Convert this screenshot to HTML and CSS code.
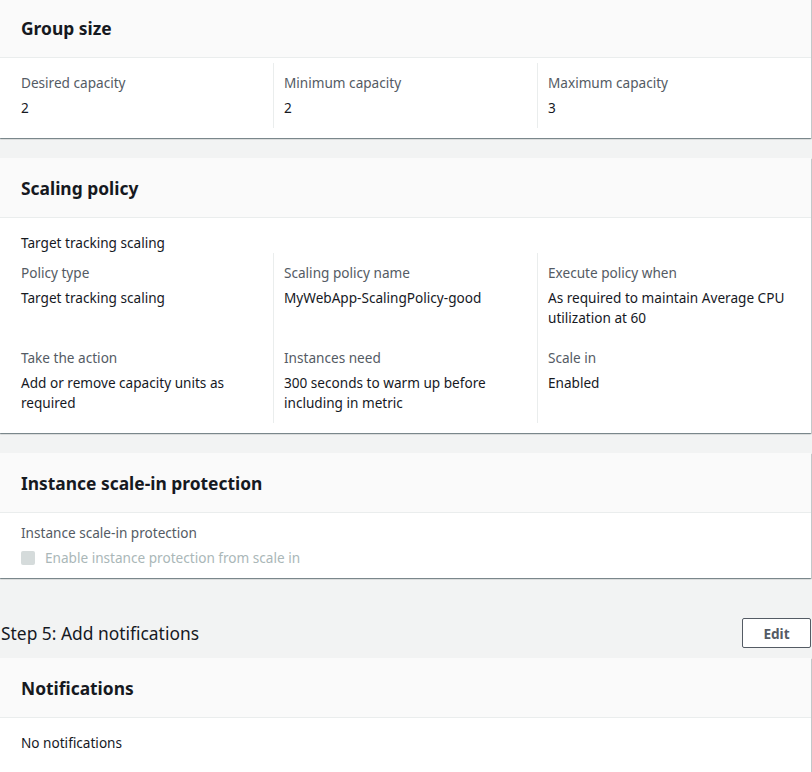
FILE: index.html
```html
<!DOCTYPE html>
<html>
<head>
<meta charset="utf-8">
<link rel="stylesheet" href="styles.css">
</head>
<body>
<div class="page">
  <section class="card">
    <header class="card-head"><h2>Group size</h2></header>
    <div class="card-body cols">
      <div class="col"><div class="label">Desired capacity</div><div class="value">2</div></div>
      <div class="col"><div class="label">Minimum capacity</div><div class="value">2</div></div>
      <div class="col"><div class="label">Maximum capacity</div><div class="value">3</div></div>
    </div>
  </section>

  <section class="card">
    <header class="card-head"><h2>Scaling policy</h2></header>
    <div class="card-body">
      <div class="subhead">Target tracking scaling</div>
      <div class="cols">
        <div class="col top"><div class="label">Policy type</div><div class="value">Target tracking scaling</div></div>
        <div class="col top"><div class="label">Scaling policy name</div><div class="value">MyWebApp-ScalingPolicy-good</div></div>
        <div class="col top"><div class="label">Execute policy when</div><div class="value">As required to maintain Average CPU utilization at 60</div></div>
        <div class="col bottom"><div class="label">Take the action</div><div class="value">Add or remove capacity units as required</div></div>
        <div class="col bottom"><div class="label">Instances need</div><div class="value">300 seconds to warm up before including in metric</div></div>
        <div class="col bottom"><div class="label">Scale in</div><div class="value">Enabled</div></div>
      </div>
    </div>
  </section>

  <section class="card">
    <header class="card-head"><h2>Instance scale-in protection</h2></header>
    <div class="card-body plain">
      <div class="label">Instance scale-in protection</div>
      <div class="check"><span class="box"></span><span class="check-text">Enable instance protection from scale in</span></div>
    </div>
  </section>

  <div class="step">
    <h1>Step 5: Add notifications</h1>
    <button class="btn">Edit</button>
  </div>

  <section class="card">
    <header class="card-head"><h2>Notifications</h2></header>
    <div class="card-body plain note">
      <div class="value">No notifications</div>
    </div>
  </section>
</div>
</body>
</html>
```

FILE: styles.css
```css
* { box-sizing: border-box; }
html, body { margin: 0; padding: 0; }
body {
  background: #f2f3f3;
  font-family: "Noto Sans", "Open Sans", sans-serif;
  font-size: 13.6px;
  line-height: 20px;
  color: #16191f;
}
.page {
  width: 811px;
  margin-top: -2px;
}
.card {
  background: #fff;
  box-shadow: 0 1px 1px 0 rgba(0,28,36,.3), 1px 1px 1px 0 rgba(0,28,36,.15), -1px 1px 1px 0 rgba(0,28,36,.15);
  margin-bottom: 20px;
}
.card-head {
  background: #fafafa;
  border-bottom: 1px solid #eaeded;
  padding: 19px 21px 18px;
}
.card-head h2 {
  margin: 0;
  font-size: 17.4px;
  line-height: 22px;
  font-weight: 700;
  color: #16191f;
}
.card-body {
  padding: 5px 0 10px 9px;
}
.cols {
  display: grid;
  grid-template-columns: 264px 264px 264px;
}
.col {
  padding: 10px 12px;
}
.col:not(:nth-child(3n+1)) {
  border-left: 1px solid #eaeded;
  padding-left: 10px;
}
.label {
  color: #545b64;
}
.value {
  margin-top: 5px;
  color: #16191f;
}
.subhead {
  padding: 10px 12px 0;
}
.plain {
  padding: 10px 21px 10px;
}
.plain .value { margin-top: 0; }
.note { padding: 15px 21px 30px; }
.check {
  display: flex;
  align-items: center;
  margin-top: 5px;
}
.box {
  width: 14px;
  height: 14px;
  background: #d5dbdb;
  border-radius: 2px;
  margin-right: 10px;
}
.check-text { color: #aab7b8; }
.step {
  display: flex;
  justify-content: space-between;
  align-items: center;
  margin-top: 40px;
  margin-bottom: 10px;
  height: 30px;
}
.step h1 {
  margin: 0 0 0 1px;
  font-size: 17.4px;
  font-weight: 400;
  line-height: 22px;
  color: #16191f;
}
.btn {
  font-family: inherit;
  font-size: 13.6px;
  font-weight: 700;
  color: #545b64;
  background: #fff;
  border: 1px solid #545b64;
  border-radius: 2px;
  width: 69px;
  height: 30px;
  padding: 0;
  margin-right: 0;
}
```
